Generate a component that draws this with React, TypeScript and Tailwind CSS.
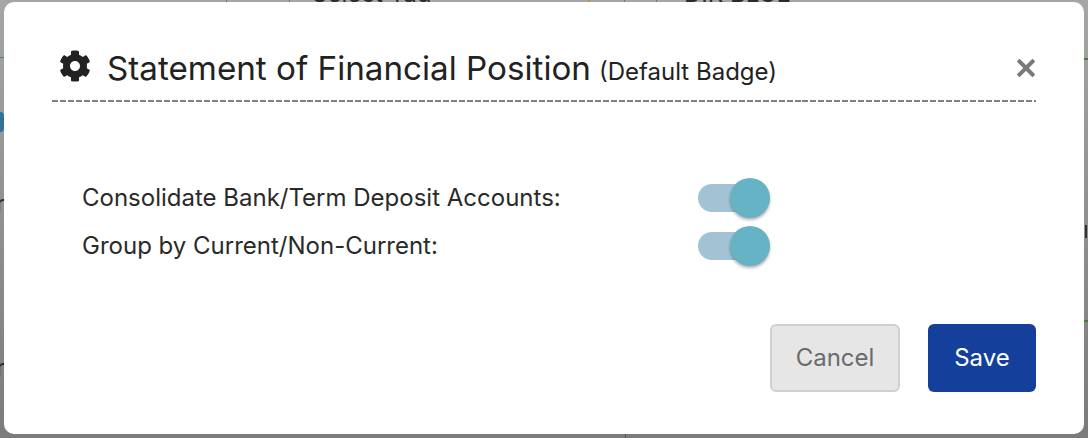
import React from "react";

function Toggle() {
  return (
    <div className="flex h-[28px] w-[72px] items-center">
      <div className="h-[28px] w-[56px] shrink-0 rounded-full bg-[#a1c3d3]" />
      <div className="my-[-6px] ml-[-24px] h-[40px] w-[40px] shrink-0 rounded-full bg-[#66b3c6] shadow-[0_2px_3px_rgba(0,0,0,0.3)]" />
    </div>
  );
}

function Gear() {
  return (
    <svg viewBox="0 0 512 512" className="h-[32px] w-[32px] fill-[#222222]">
      <path d="M487.4 315.7l-42.6-24.6c4.3-23.2 4.3-47 0-70.2l42.6-24.6c4.9-2.8 7.1-8.6 5.5-14-11.1-35.6-30-67.8-54.7-94.6-3.8-4.1-10-5.1-14.8-2.3L380.8 110c-17.9-15.4-38.5-27.3-60.8-35.1V25.8c0-5.6-3.9-10.5-9.4-11.7-36.7-8.2-74.3-7.8-109.2 0-5.5 1.2-9.4 6.1-9.4 11.7V75c-22.2 7.9-42.8 19.8-60.8 35.1L88.7 85.5c-4.9-2.8-11-1.9-14.8 2.3-24.7 26.7-43.6 58.9-54.7 94.6-1.7 5.4.6 11.2 5.5 14L67.3 221c-4.3 23.2-4.3 47 0 70.2l-42.6 24.6c-4.9 2.8-7.1 8.6-5.5 14 11.1 35.6 30 67.8 54.7 94.6 3.8 4.1 10 5.1 14.8 2.3l42.6-24.6c17.9 15.4 38.5 27.3 60.8 35.1v49.2c0 5.6 3.9 10.5 9.4 11.7 36.7 8.2 74.3 7.8 109.2 0 5.5-1.2 9.4-6.1 9.4-11.7v-49.2c22.2-7.9 42.8-19.8 60.8-35.1l42.6 24.6c4.9 2.8 11 1.9 14.8-2.3 24.7-26.7 43.6-58.9 54.7-94.6 1.5-5.5-.7-11.3-5.6-14.1zM256 336c-44.1 0-80-35.9-80-80s35.9-80 80-80 80 35.9 80 80-35.9 80-80 80z" />
    </svg>
  );
}

export default function App() {
  return (
    <div className="relative flex h-[438px] w-[1088px] overflow-hidden bg-gradient-to-b from-[#a6a6a6] to-[#7b7b7b] pl-[4px] pt-[2px] font-['Inter',sans-serif]">
      {/* page behind the dialog, showing round its edge */}
      <div className="absolute left-0 top-[57px] h-[1px] w-[4px] bg-[#3f7ea0]" />
      <div className="absolute left-0 top-[112px] h-[20px] w-[4px] rounded-r-full bg-[#2f7396]" />
      <span className="absolute left-[-4px] top-[190px] text-[24px] leading-[28px] text-[#2a2a2a]">r</span>
      <span className="absolute left-[-4px] top-[354px] text-[24px] leading-[28px] text-[#2a2a2a]">r</span>
      <div className="absolute right-0 top-[58px] h-[2px] w-[4px] bg-[#4c7a3c]" />
      <div className="absolute right-0 top-[320px] h-[2px] w-[4px] bg-[#4c7a3c]" />
      <div className="absolute right-[1px] top-[225px] h-[13px] w-[2px] bg-[#333333]" />
      <div className="absolute left-[226px] top-0 h-[2px] w-[1px] bg-[#777777]" />
      <div className="absolute left-[289px] top-0 h-[2px] w-[1px] bg-[#777777]" />
      <div className="absolute left-[588px] top-0 h-[2px] w-[2px] bg-[#c08a4a]" />
      <div className="absolute left-[624px] top-0 h-[2px] w-[1px] bg-[#777777]" />
      <div className="absolute left-[656px] top-0 h-[2px] w-[1px] bg-[#777777]" />
      <div className="absolute bottom-0 left-[625px] h-[4px] w-[1px] bg-[#3a5a70]" />
      <span className="absolute left-[312px] top-[-20px] text-[24px] leading-[28px] text-[#2a2a2a]">Select Tad</span>
      <span className="absolute left-[684px] top-[-20px] text-[24px] leading-[28px] text-[#2a2a2a]">DIR BLGE</span>

      <div className="relative flex h-[432px] w-[1080px] flex-col rounded-[10px] bg-white px-[48px] pt-[43px]">
        <div className="flex h-[55px] items-start">
          <div className="ml-[7px] mt-[5px]"><Gear /></div>
          <h1 className="ml-[16px] text-[33.2px] leading-[46px] text-[#222222]">Statement of Financial Position</h1>
          <span className="ml-[8px] mt-[12px] text-[24px] leading-[30px] text-[#222222]">(Default Badge)</span>
          <span className="ml-auto mr-[1px] mt-[14px] text-[#7a7a7a]">
            <svg viewBox="0 0 18 18" className="h-[18px] w-[18px]" stroke="currentColor" strokeWidth="4" strokeLinecap="square"><path d="M2.5 2.5L15.5 15.5M15.5 2.5L2.5 15.5" /></svg>
          </span>
        </div>
        <div className="h-[2px] bg-[repeating-linear-gradient(90deg,#808080_0,#808080_6px,transparent_6px,transparent_7.984px)]" />
        <div className="mt-[82px] flex flex-col gap-[20px] pl-[30px] text-[24px] leading-[28px] text-[#2a2a2a]">
          <div className="flex items-center">
            <div className="w-[616px]">Consolidate Bank/Term Deposit Accounts:</div>
            <Toggle />
          </div>
          <div className="flex items-center">
            <div className="w-[616px]">Group by Current/Non-Current:</div>
            <Toggle />
          </div>
        </div>
        <div className="mt-[64px] flex justify-end gap-[28px] text-[24px]">
          <button className="h-[68px] w-[130px] rounded-[6px] border-2 border-[#d0d0d0] bg-[#e6e6e6] text-[#6b6b6b]">Cancel</button>
          <button className="h-[68px] w-[108px] rounded-[6px] bg-[#14409c] text-white">Save</button>
        </div>
      </div>
    </div>
  );
}
